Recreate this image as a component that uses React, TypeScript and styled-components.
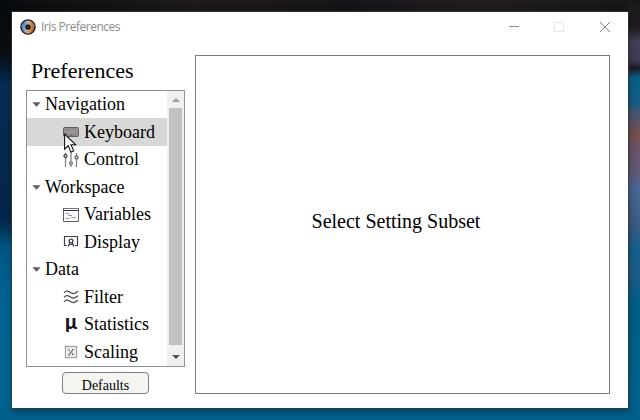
import React from "react";
import styled, { createGlobalStyle } from "styled-components";

const GlobalStyle = createGlobalStyle`
  * { box-sizing: border-box; }
  body { margin: 0; overflow: hidden; font-family: "Liberation Serif", "Times New Roman", serif; color: #000; }
`;

const Desktop = styled.main`
  position: relative;
  width: 640px;
  height: 420px;
  padding: 12px;
  background:
    linear-gradient(#191719 0, #211d22 28px, #454057 42px, #403b58 60px, #1f1c22 68px, #075f87 77px, #155f88 102px, #4a5670 114px, #78504f 134px, #6b5368 148px, #635a79 174px, #496896 188px, #3d5b84 225px, #14608c 250px, #1f5d88 276px, #006088 300px, #00638c 400px) 628px 0 / 12px 408px no-repeat,
    linear-gradient(#070a0f 0, #0a0e13 52px, #061c33 70px, #062d54 85px, #05294b 145px, #04264a 220px, #005784 248px, #006394 300px, #006391 408px) 0 0 / 12px 408px no-repeat,
    linear-gradient(90deg, #0a0b0f, #1d191a 30%, #171419 55%, #211d21 75%, #171518) 0 0 / 640px 12px no-repeat,
    #00608b;
`;

const Window = styled.section`
  display: flex;
  flex-direction: column;
  width: 616px;
  height: 396px;
  background: #fff;
  box-shadow: 0 0 0 1px rgba(55, 58, 60, 0.65), 1px 3px 8px rgba(0, 0, 0, 0.4);
`;

const TitleBar = styled.header`
  display: flex;
  align-items: center;
  height: 29px;
  padding-left: 8px;
`;

const WindowTitle = styled.h1`
  flex: 1;
  margin: 1px 0 0 5px;
  font: 400 12px/16px "Open Sans", "Noto Sans", sans-serif;
  letter-spacing: -0.5px;
  color: #8a8e88;
`;

const WindowButton = styled.button`
  display: grid;
  place-items: center;
  width: 46px;
  height: 29px;
  padding: 0;
  border: 0;
  background: none;
`;

const Body = styled.div`
  display: grid;
  grid-template-columns: 159px 415px;
  column-gap: 10px;
  padding: 14px 18px 0 14px;
`;

const Sidebar = styled.aside`
  display: flex;
  flex-direction: column;
  height: 339px;
`;

const Heading = styled.h2`
  height: 35px;
  margin: 0;
  padding: 3px 0 0 5px;
  font-size: 22px;
  font-weight: 400;
  line-height: 26px;
`;

const TreePane = styled.div`
  display: flex;
  height: 277px;
  border: 1px solid #929292;
`;

const Tree = styled.div`
  flex: 1;
  display: grid;
  grid-template-rows: 27px 28px repeat(8, 27.5px);
  height: 275px;
  overflow: hidden;
`;

const GroupRow = styled.div`
  display: flex;
  align-items: center;
  gap: 4px;
  padding: 0 0 0 5px;
  font-size: 18px;
  line-height: 27px;
`;

const ItemRow = styled.div<{ $selected?: boolean }>`
  display: flex;
  align-items: center;
  gap: 5px;
  padding-left: 36px;
  font-size: 18px;
  line-height: 27px;
  background: ${(p) => (p.$selected ? "#d8d8d6" : "transparent")};
`;

const IconFrame = styled.svg`
  display: block;
  flex: none;
  overflow: visible;
`;

const ScrollBar = styled.div`
  display: flex;
  flex-direction: column;
  align-items: center;
  width: 17px;
  padding-right: 2px;
  background: #f0f0f0;
`;

const ScrollArrow = styled.div<{ $end?: boolean }>`
  display: grid;
  place-items: center;
  height: ${(p) => (p.$end ? 21 : 17)}px;
  padding: ${(p) => (p.$end ? "3px 0 0 2px" : "0 0 0 2px")};
  svg { display: block; }
`;

const ScrollThumb = styled.div`
  width: 13px;
  height: 237px;
  margin-left: 2px;
  background: #c1c1c1;
`;

const DefaultsButton = styled.button`
  width: 87px;
  height: 22px;
  margin: 5px 0 0 36px;
  padding: 5px 0 0;
  border: 1px solid #808080;
  border-radius: 4px;
  background: #f4f5f1;
  color: #000;
  font: 14px/15px "Liberation Serif", serif;
`;

const SettingsPane = styled.section`
  display: grid;
  place-items: center;
  height: 339px;
  padding: 0 13px 7px 0;
  border: 1px solid #7c7c7c;
  font-size: 20px;
  line-height: 24px;
`;

const Cursor = styled.svg`
  position: absolute;
  left: 64px;
  top: 133px;
`;

const IrisLogo = () => (
  <svg width="16" height="16" viewBox="0 0 16 16">
    <defs>
      <linearGradient id="iris" x1="0" x2="1" y1="0.3" y2="0.5">
        <stop offset="0.1" stopColor="#4b84bb" />
        <stop offset="0.4" stopColor="#8fb2d0" />
        <stop offset="0.6" stopColor="#e5a05c" />
        <stop offset="1" stopColor="#a65c2b" />
      </linearGradient>
    </defs>
    <circle cx="8" cy="8" r="7.1" fill="url(#iris)" stroke="#24222d" strokeWidth="1.4" />
    <path d="M3 4l3 2M12 3l-2 3M12 12l-2-2M3 11l3-2" stroke="#303647" strokeOpacity=".35" strokeWidth=".6" />
    <circle cx="8" cy="8" r="2.6" fill="#0e0c10" />
    <circle cx="8" cy="8" r=".6" fill="#bec9d1" />
  </svg>
);

const Caret = () => (
  <svg width="9" height="5" viewBox="0 0 9 5"><path d="M.3 .3h8.400l-4.200 4.500z" fill="#655766" /></svg>
);

type IconName = "keyboard" | "control" | "variables" | "display" | "filter" | "statistics" | "scaling";

const drawings: Record<IconName, React.ReactNode> = {
  keyboard: (
    <>
      <rect x=".5" y="3.5" width="15" height="9" rx="1" fill="#9b9298" stroke="#625c62" />
      <path d="M2 5.500h12" stroke="#8b8289" />
      <path d="M3.500 9v3M5.500 11.500h5M8.500 9.500v2M12.500 9v3" stroke="#797078" fill="none" />
    </>
  ),
  control: (
    <g fill="none" stroke="#858289" strokeWidth="1.3">
      <path d="M2.500 1v1.500M2.500 5.500V15M8 0v9.500M8 13v2M13.500 1v3M13.500 7v8" />
      <circle cx="2.500" cy="4" r="1.500" stroke="#45434b" fill="#fff" />
      <circle cx="8" cy="11.200" r="1.500" fill="#b7b4ba" />
      <circle cx="13.500" cy="5.500" r="1.500" stroke="#66636b" fill="#fff" />
    </g>
  ),
  variables: (
    <g fill="none">
      <path d="M.5 1v13.500h15V1" stroke="#625d69" />
      <path d="M0 1.500h16" stroke="#77727e" />
      <path d="M0 3.500h16" stroke="#373141" />
      <path d="M2.500 6.500h4M5 8.500h4M8 10.500h5M2.500 11.500h4" stroke="#9b98a0" />
    </g>
  ),
  display: (
    <g fill="none" stroke="#42414b" strokeWidth="1.2">
      <path d="M4 11.500H1.500v-9h13v9H12" />
      <circle cx="8" cy="7" r="1.900" strokeWidth="1.400" />
      <path d="M6.800 8.500L5.300 12.500M9.200 8.500l1.500 4M6.500 10.500h3" />
    </g>
  ),
  filter: (
    <g fill="none" stroke="#4c4751" strokeWidth="1.2">
      <path d="M1 3.800C3 1.300 5 1.800 7 3.300S12 5.100 15 2.300" />
      <path d="M1 8.300C3 5.800 5 6.300 7 7.800S12 9.600 15 6.800" />
      <path d="M1 12.800C3 10.300 5 10.800 7 12.300S12 14.100 15 11.300" />
    </g>
  ),
  statistics: (
    <text x="2" y="12" fontFamily="Lato, sans-serif" fontWeight="900" fontSize="20" fill="#151318">μ</text>
  ),
  scaling: (
    <g fill="none">
      <rect x="2.500" y="2.500" width="11" height="11" stroke="#a29aa1" strokeWidth="1.300" />
      <rect x="4.500" y="4.500" width="7" height="7" stroke="#c9c4c9" strokeDasharray="1 1" />
      <path d="M10.500 5L5.500 11.500M5.500 5.500l1.500 1.500M9 9l1.500 2" stroke="#777079" strokeWidth="1.300" />
    </g>
  ),
};

const ItemIcon = ({ name }: { name: IconName }) => (
  <IconFrame width="16" height="16" viewBox="0 0 16 16">{drawings[name]}</IconFrame>
);

const groups: { label: string; items: { label: string; icon: IconName; selected?: boolean }[] }[] = [
  { label: "Navigation", items: [{ label: "Keyboard", icon: "keyboard", selected: true }, { label: "Control", icon: "control" }] },
  { label: "Workspace", items: [{ label: "Variables", icon: "variables" }, { label: "Display", icon: "display" }] },
  { label: "Data", items: [{ label: "Filter", icon: "filter" }, { label: "Statistics", icon: "statistics" }, { label: "Scaling", icon: "scaling" }] },
];

export default function App() {
  return (
    <Desktop>
      <GlobalStyle />
      <Window>
        <TitleBar>
          <IrisLogo />
          <WindowTitle>Iris Preferences</WindowTitle>
          <WindowButton aria-label="Minimize">
            <svg width="12" height="11" viewBox="0 0 12 11"><path d="M2 5.500h10" stroke="#8b8b8b" /></svg>
          </WindowButton>
          <WindowButton aria-label="Maximize" disabled>
            <svg width="10" height="10" viewBox="0 0 10 10"><rect x=".5" y=".5" width="9" height="9" fill="none" stroke="#e7e7e7" /></svg>
          </WindowButton>
          <WindowButton aria-label="Close">
            <svg width="10" height="10" viewBox="0 0 10 10"><path d="M0 0l10 10M10 0L0 10" stroke="#858585" /></svg>
          </WindowButton>
        </TitleBar>
        <Body>
          <Sidebar>
            <Heading>Preferences</Heading>
            <TreePane>
              <Tree>
                {groups.map((group) => (
                  <React.Fragment key={group.label}>
                    <GroupRow><Caret />{group.label}</GroupRow>
                    {group.items.map((item) => (
                      <ItemRow key={item.label} $selected={item.selected}>
                        <ItemIcon name={item.icon} />{item.label}
                      </ItemRow>
                    ))}
                  </React.Fragment>
                ))}
              </Tree>
              <ScrollBar>
                <ScrollArrow><svg width="8" height="4" viewBox="0 0 8 4"><path d="M0 4h8L4 0z" fill="#a099a0" /></svg></ScrollArrow>
                <ScrollThumb />
                <ScrollArrow $end><svg width="8" height="4" viewBox="0 0 8 4"><path d="M0 0h8L4 4z" fill="#50495a" /></svg></ScrollArrow>
              </ScrollBar>
            </TreePane>
            <DefaultsButton>Defaults</DefaultsButton>
          </Sidebar>
          <SettingsPane>Select Setting Subset</SettingsPane>
        </Body>
      </Window>
      <Cursor width="13" height="21" viewBox="0 0 13 21">
        <path d="M.6 1v15.200l3.600-3.400 2.700 6.300 2.800-1.200-2.700-6.100h4.800z" fill="#fff" stroke="#17151c" strokeWidth="1.100" />
      </Cursor>
    </Desktop>
  );
}
